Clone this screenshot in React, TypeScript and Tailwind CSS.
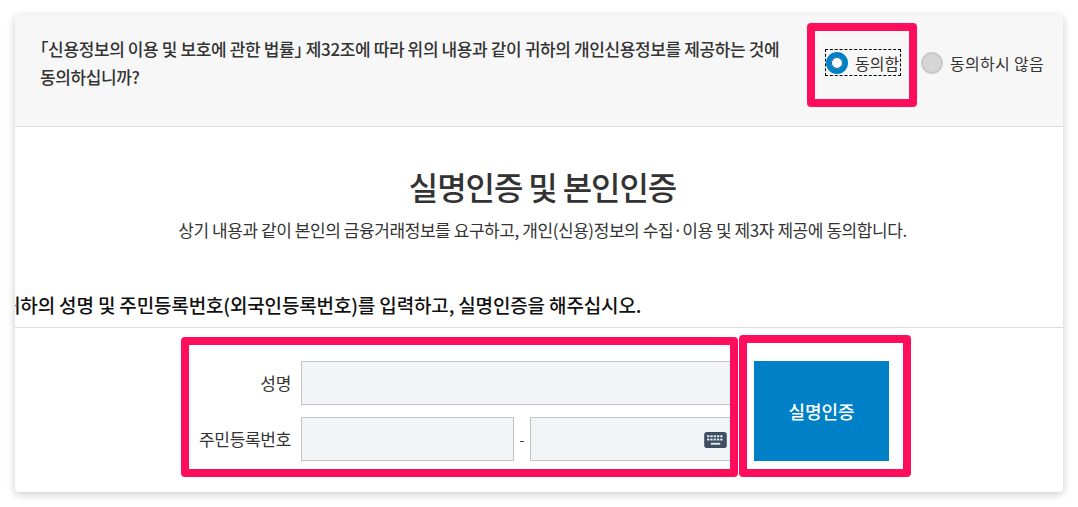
const Radio = ({ checked }: { checked?: boolean }) =>
  checked ? (
    <span className="block w-[22px] h-[22px] rounded-full border-[5px] border-[#0080c6] bg-white shadow-[inset_0_0_0_1px_#0a5f8f]"></span>
  ) : (
    <span className="block w-[22px] h-[22px] rounded-full border-2 border-[#c9c9c9] bg-[#d6d6d6]"></span>
  );

const App = () => {
  return (
    <div className="w-[1078px] h-[507px] bg-white overflow-hidden pt-[15px] pl-[15px] font-['Noto_Sans_CJK_KR','Noto_Sans',sans-serif] text-[#333]">
      <div className="relative w-[1048px] h-[477px] bg-white rounded-[4px] shadow-[0_2px_8px_rgba(0,0,0,0.22)] overflow-visible">
        <div className="flex items-center justify-between h-[112px] bg-[#f7f7f7] border-b border-[#dcdcdc] rounded-t-[4px] pl-[25px] pr-[19px]">
          <p className="w-[745px] text-[17px] leading-[28px] font-medium tracking-[-0.38px] mb-[16px]">
            ｢신용정보의 이용 및 보호에 관한 법률｣ 제32조에 따라 위의 내용과 같이 귀하의 개인신용정보를 제공하는 것에 동의하십니까?
          </p>
          <div className="flex items-center mb-[16px]">
            <label className="flex items-center gap-[7px] border border-dashed border-black h-[27px] w-[76px] mr-[20px] text-[16px] whitespace-nowrap">
              <Radio checked />
              <span>동의함</span>
            </label>
            <label className="flex items-center gap-[7px] text-[16px] tracking-[0.3px] whitespace-nowrap">
              <Radio />
              <span>동의하시 않음</span>
            </label>
          </div>
        </div>

        <h2 className="mt-[37px] pl-[7px] text-center text-[32px] leading-[44px] font-medium tracking-[-1.1px] text-[#333]">실명인증 및 본인인증</h2>
        <p className="mt-[10px] pl-[7px] text-center text-[17px] leading-[24px] tracking-[-0.43px]">
          상기 내용과 같이 본인의 금융거래정보를 요구하고, 개인(신용)정보의 수집·이용 및 제3자 제공에 동의합니다.
        </p>

        <div className="mt-[49px] h-[37px] border-b border-[#dcdcdc] overflow-hidden">
          <h3 className="ml-[-12px] text-[19px] leading-[28px] font-medium tracking-[-0.15px] text-[#111] whitespace-nowrap">
            귀하의 성명 및 주민등록번호(외국인등록번호)를 입력하고, 실명인증을 해주십시오.
          </h3>
        </div>

        <div className="flex mt-[33px] pl-[170px]">
          <div className="w-[106px] flex flex-col gap-[12px] text-[17px] tracking-[-0.3px] text-right">
            <div className="h-[44px] leading-[44px]">성명</div>
            <div className="h-[44px] leading-[44px]">주민등록번호</div>
          </div>
          <div className="ml-[10px] w-[430px] flex flex-col gap-[12px]">
            <div className="h-[44px] border border-[#c4c4c4] bg-[#f2f3f7]"></div>
            <div className="flex items-center">
              <div className="w-[213px] h-[44px] border border-[#c4c4c4] bg-[#f2f3f7]"></div>
              <span className="w-[16px] text-center text-[14px]">-</span>
              <div className="relative flex-1 h-[44px] border border-[#c4c4c4] bg-[#f2f3f7]">
                <svg className="absolute right-[3px] top-[14px]" width="23" height="16" viewBox="0 0 24 17">
                  <rect width="24" height="17" rx="3" fill="#3d4f63" />
                  <g fill="#e8ebef">
                    <rect x="3" y="3.5" width="2.5" height="2" />
                    <rect x="6.5" y="3.5" width="2.5" height="2" />
                    <rect x="10" y="3.5" width="2.5" height="2" />
                    <rect x="13.5" y="3.5" width="2.5" height="2" />
                    <rect x="17" y="3.5" width="2.5" height="2" />
                    <rect x="3" y="7" width="2.5" height="2" />
                    <rect x="6.5" y="7" width="2.5" height="2" />
                    <rect x="10" y="7" width="2.5" height="2" />
                    <rect x="13.5" y="7" width="2.5" height="2" />
                    <rect x="17" y="7" width="2.5" height="2" />
                    <rect x="7" y="11.5" width="10" height="2" />
                  </g>
                </svg>
              </div>
            </div>
          </div>
          <button className="ml-[23px] w-[135px] h-[100px] bg-[#0080c6] text-white text-[18px] font-medium tracking-[0px]">실명인증</button>
        </div>

        {/* annotation boxes drawn over the form */}
        <div className="absolute left-[792px] top-[8px] w-[110px] h-[84px] border-[8px] border-[#ff0f5b] rounded-[4px]"></div>
        <div className="absolute left-[166px] top-[322px] w-[557px] h-[140px] border-[8px] border-[#ff0f5b] rounded-[4px]"></div>
        <div className="absolute left-[724px] top-[320px] w-[172px] h-[142px] border-[8px] border-[#ff0f5b] rounded-[4px]"></div>
      </div>
    </div>
  );
};

export default App;
